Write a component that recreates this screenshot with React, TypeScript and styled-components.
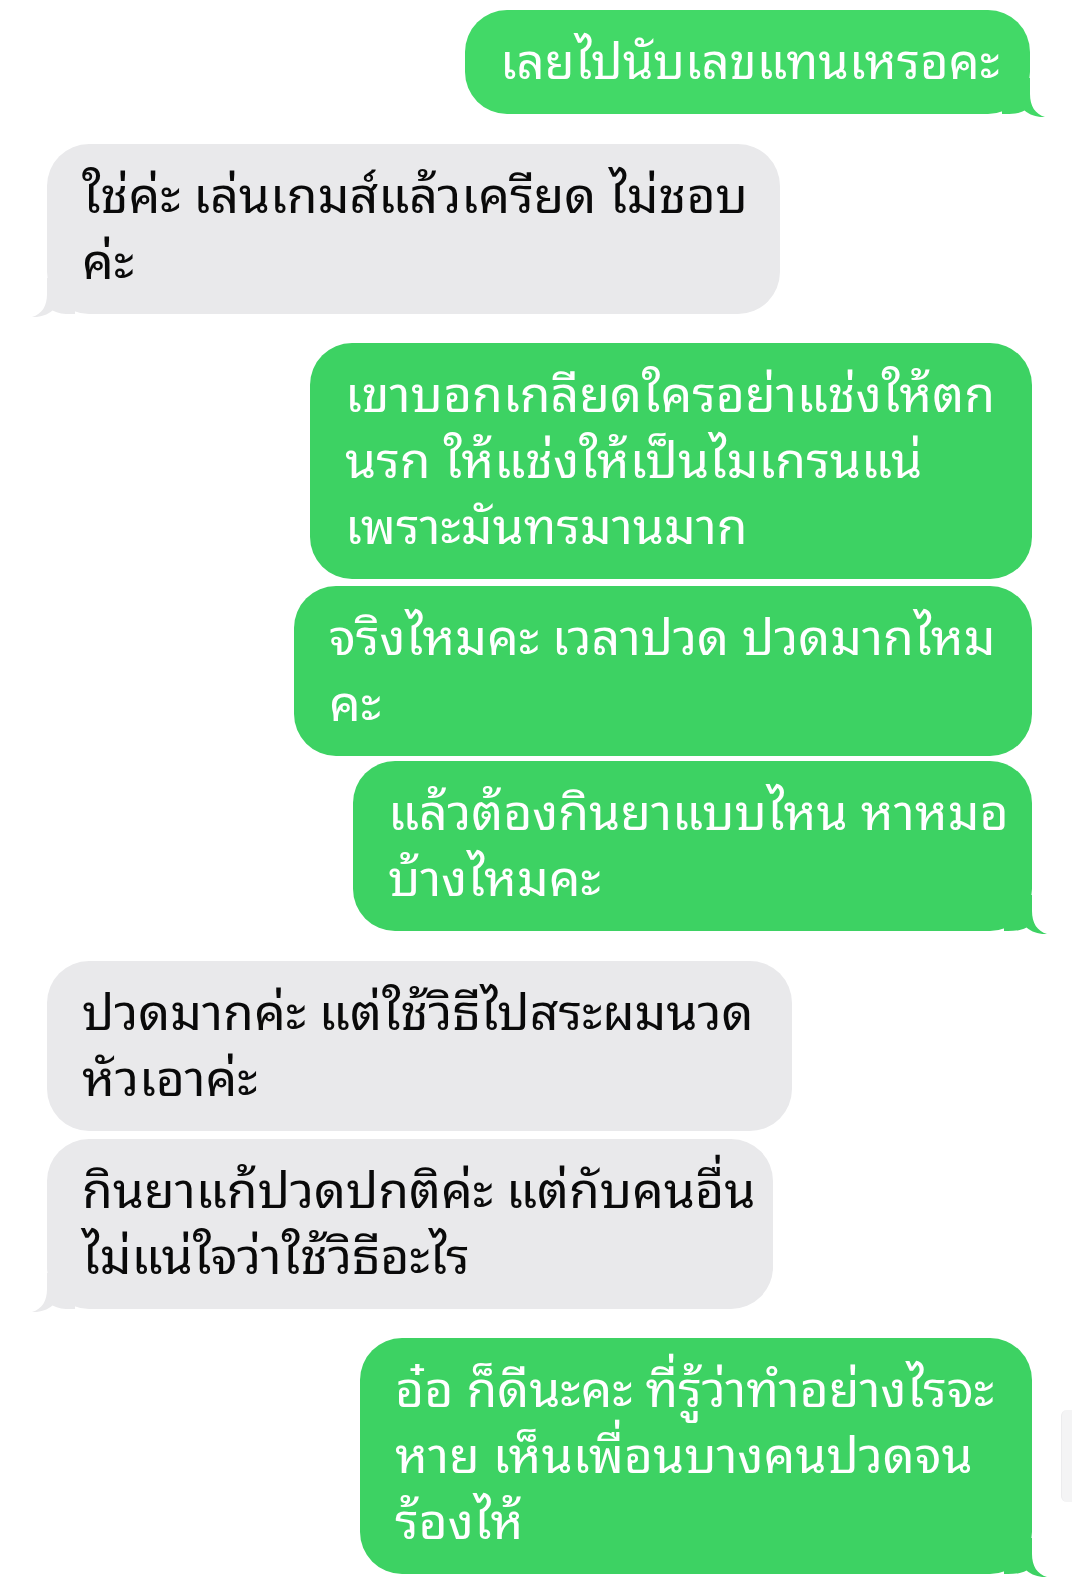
import React from "react";
import styled, { createGlobalStyle } from "styled-components";

const GlobalStyle = createGlobalStyle`
  html, body {
    margin: 0;
    padding: 0;
    background: #ffffff;
  }
  body {
    font-family: "Noto Sans Thai Looped", "Loma", "Garuda", "Waree", "Norasi", "Kinnari", "Noto Sans Thai", "Noto Sans", "DejaVu Sans", sans-serif;
  }
`;

const Page = styled.div`
  position: relative;
  width: 1080px;
  min-height: 1592px;
  box-sizing: border-box;
  padding-top: 10px;
  display: flex;
  flex-direction: column;
  background: #ffffff;
  overflow: hidden;
`;

const Row = styled.div<{ $side: "left" | "right"; $gap: number; $edge: number }>`
  display: flex;
  justify-content: ${(p) => (p.$side === "right" ? "flex-end" : "flex-start")};
  margin-top: ${(p) => p.$gap}px;
  padding-left: ${(p) => (p.$side === "left" ? p.$edge : 0)}px;
  padding-right: ${(p) => (p.$side === "right" ? p.$edge : 0)}px;
`;

const Bubble = styled.div<{ $side: "left" | "right"; $w: number; $tone?: string; $size: number }>`
  position: relative;
  box-sizing: border-box;
  width: ${(p) => p.$w}px;
  padding: 14px 28px 24px 35px;
  border-radius: 42px;
  background: ${(p) => p.$tone ?? (p.$side === "right" ? "#3dd263" : "#e9e9eb")};
  color: ${(p) => (p.$side === "right" ? "#ffffff" : "#0a0a0a")};
  font-size: ${(p) => p.$size}px;
  line-height: 66px;
  font-weight: 400;
`;

const Text = styled.p`
  margin: 0;
  white-space: pre;
`;

const TailSvg = styled.svg<{ $side: "left" | "right" }>`
  position: absolute;
  bottom: -4px;
  width: 44px;
  height: 40px;
  ${(p) =>
    p.$side === "right"
      ? "right: -16px;"
      : "left: -16px; transform: scaleX(-1);"}
`;

const EdgeSliver = styled.div`
  position: absolute;
  right: 8px;
  top: 1410px;
  width: 10px;
  height: 92px;
  border-radius: 6px 0 0 6px;
  background: #f4f4f5;
  border-left: 1px solid #ececee;
`;

type Msg = {
  side: "left" | "right";
  w: number;
  gap: number;
  edge: number;
  size?: number;
  tail?: boolean;
  tone?: string;
  lines: string[];
};

const messages: Msg[] = [
  {
    side: "right",
    w: 565,
    gap: 0,
    edge: 50,
    size: 49,
    tail: true,
    tone: "#42d967",
    lines: ["เลยไปนับเลขแทนเหรอคะ"],
  },
  {
    side: "left",
    w: 733,
    gap: 30,
    edge: 47,
    tail: true,
    lines: ["ใช่ค่ะ เล่นเกมส์แล้วเครียด ไม่ชอบ", "ค่ะ"],
  },
  {
    side: "right",
    w: 722,
    gap: 29,
    edge: 48,
    lines: ["เขาบอกเกลียดใครอย่าแช่งให้ตก", "นรก ให้แช่งให้เป็นไมเกรนแน่", "เพราะมันทรมานมาก"],
  },
  {
    side: "right",
    w: 738,
    gap: 7,
    edge: 48,
    lines: ["จริงไหมคะ เวลาปวด ปวดมากไหม", "คะ"],
  },
  {
    side: "right",
    w: 679,
    gap: 5,
    edge: 48,
    tail: true,
    lines: ["แล้วต้องกินยาแบบไหน หาหมอ", "บ้างไหมคะ"],
  },
  {
    side: "left",
    w: 745,
    gap: 30,
    edge: 47,
    lines: ["ปวดมากค่ะ แต่ใช้วิธีไปสระผมนวด", "หัวเอาค่ะ"],
  },
  {
    side: "left",
    w: 726,
    gap: 8,
    edge: 47,
    tail: true,
    lines: ["กินยาแก้ปวดปกติค่ะ แต่กับคนอื่น", "ไม่แน่ใจว่าใช้วิธีอะไร"],
  },
  {
    side: "right",
    w: 672,
    gap: 29,
    edge: 48,
    tail: true,
    lines: ["อ๋อ ก็ดีนะคะ ที่รู้ว่าทำอย่างไรจะ", "หาย เห็นเพื่อนบางคนปวดจน", "ร้องไห้"],
  },
];

function Tail({ side, color }: { side: "left" | "right"; color: string }) {
  return (
    <TailSvg $side={side} viewBox="0 0 44 40" aria-hidden="true">
      <path
        d="M 28 0 L 28 16 C 28 28 33 36 43 39 C 35 39.5 28 37 22.5 32.5 C 17 35.5 11 36 4 36 L 0 36 L 0 0 Z"
        fill={color}
      />
    </TailSvg>
  );
}

export default function App() {
  return (
    <>
      <GlobalStyle />
      <Page>
        {messages.map((m, i) => {
          const color = m.tone ?? (m.side === "right" ? "#3dd263" : "#e9e9eb");
          return (
            <Row key={i} $side={m.side} $gap={m.gap} $edge={m.edge}>
              <Bubble $side={m.side} $w={m.w} $tone={m.tone} $size={m.size ?? 50}>
                <Text>{m.lines.join("\n")}</Text>
                {m.tail && <Tail side={m.side} color={color} />}
              </Bubble>
            </Row>
          );
        })}
        <EdgeSliver />
      </Page>
    </>
  );
}
